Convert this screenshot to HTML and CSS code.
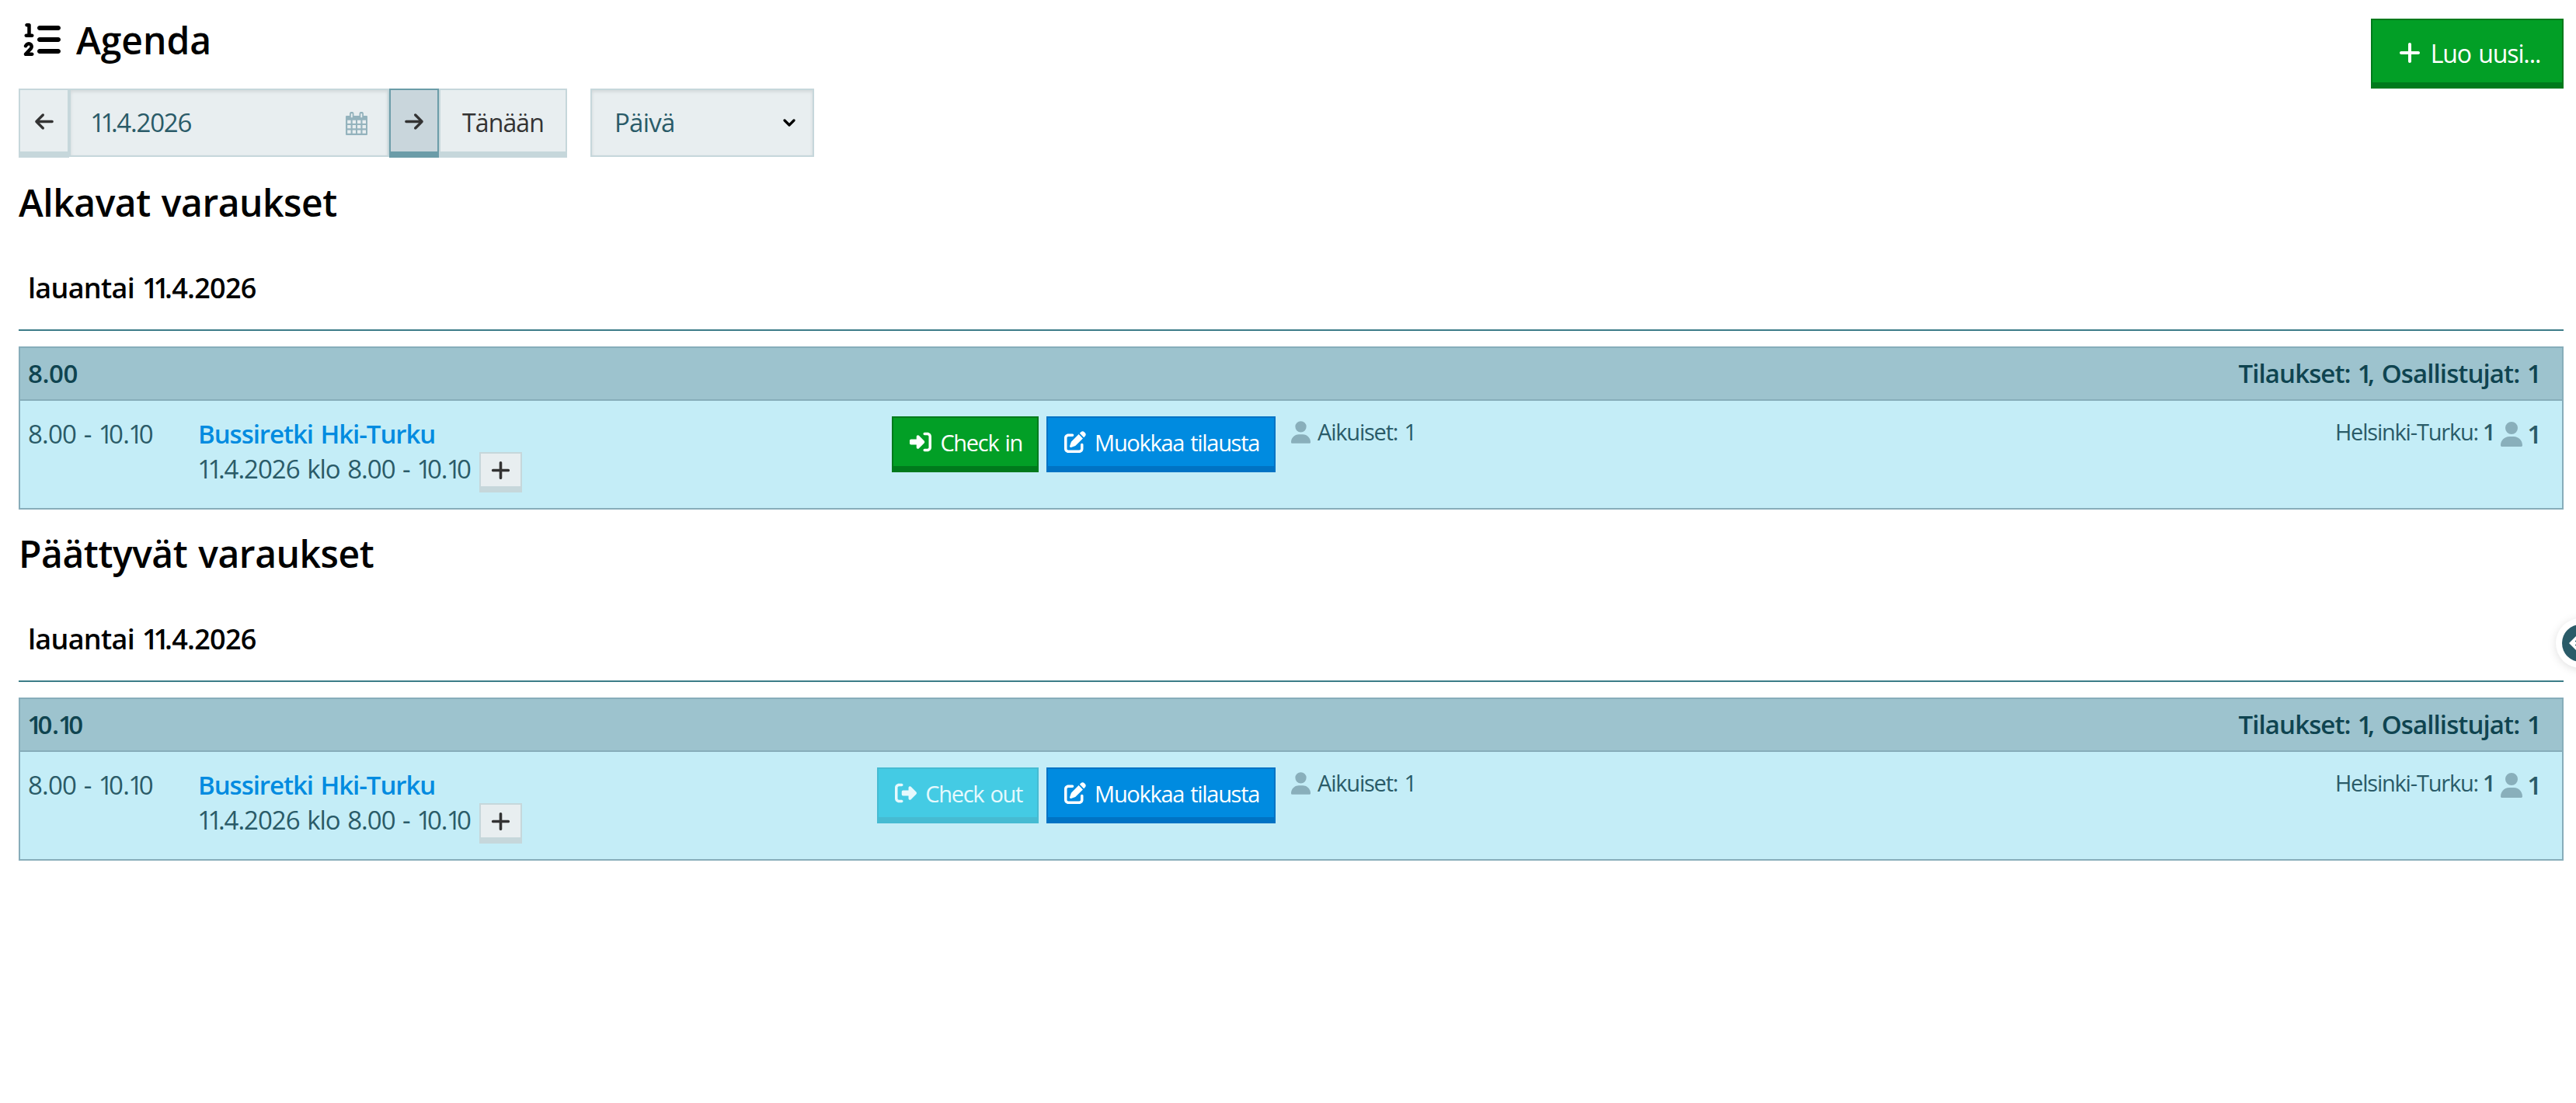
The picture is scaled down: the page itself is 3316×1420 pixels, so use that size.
FILE: index.html
```html
<!DOCTYPE html>
<html lang="fi">
<head>
  <meta charset="UTF-8">
  <meta name="viewport" content="width=device-width, initial-scale=1.0">
  <title>Agenda</title>
  <link rel="stylesheet" href="styles.css">
</head>
<body>
  <svg class="sprite">
    <symbol id="list" viewBox="0 0 512 512"><path d="M24 56c0-13.3 10.7-24 24-24l32 0c13.3 0 24 10.7 24 24l0 120 16 0c13.3 0 24 10.7 24 24s-10.7 24-24 24l-80 0c-13.3 0-24-10.7-24-24s10.7-24 24-24l16 0 0-96-8 0C34.7 80 24 69.3 24 56zM86.7 341.2c-6.5-7.4-18.3-6.9-24 1.2L51.5 357.9c-7.7 10.8-22.7 13.3-33.5 5.6s-13.3-22.7-5.6-33.5l11.1-15.6c23.7-33.2 72.3-35.6 99.2-4.9c21.3 24.4 20.8 60.9-1.1 84.7L86.8 432l33.2 0c13.3 0 24 10.7 24 24s-10.7 24-24 24l-88 0c-9.5 0-18.2-5.6-22-14.4s-2.1-18.9 4.3-25.9l72-78c5.3-5.8 5.4-14.6 .3-20.5zM224 64l256 0c17.7 0 32 14.3 32 32s-14.3 32-32 32l-256 0c-17.7 0-32-14.3-32-32s14.3-32 32-32zm0 160l256 0c17.7 0 32 14.3 32 32s-14.3 32-32 32l-256 0c-17.7 0-32-14.3-32-32s14.3-32 32-32zm0 160l256 0c17.7 0 32 14.3 32 32s-14.3 32-32 32l-256 0c-17.7 0-32-14.3-32-32s14.3-32 32-32z"/></symbol>
    <symbol id="left" viewBox="0 0 448 512"><path d="M9.4 233.4c-12.5 12.5-12.5 32.8 0 45.3l160 160c12.5 12.5 32.8 12.5 45.3 0s12.5-32.8 0-45.3L109.2 288 416 288c17.7 0 32-14.3 32-32s-14.3-32-32-32l-306.7 0L214.6 118.6c12.5-12.5 12.5-32.8 0-45.3s-32.8-12.5-45.3 0l-160 160z"/></symbol>
    <symbol id="right" viewBox="0 0 448 512"><path d="M438.6 278.6c12.5-12.5 12.5-32.8 0-45.3l-160-160c-12.5-12.5-32.8-12.5-45.3 0s-12.5 32.8 0 45.3L338.8 224 32 224c-17.7 0-32 14.3-32 32s14.3 32 32 32l306.7 0L233.4 393.4c-12.5 12.5-12.5 32.8 0 45.3s32.8 12.5 45.3 0l160-160z"/></symbol>
    <symbol id="plus" viewBox="0 0 448 512"><path d="M256 80c0-17.7-14.3-32-32-32s-32 14.3-32 32l0 144L48 224c-17.7 0-32 14.3-32 32s14.3 32 32 32l144 0 0 144c0 17.7 14.3 32 32 32s32-14.3 32-32l0-144 144 0c17.7 0 32-14.3 32-32s-14.3-32-32-32l-144 0 0-144z"/></symbol>
    <symbol id="in" viewBox="0 0 512 512"><path d="M217.9 105.9L340.7 228.7c7.2 7.2 11.3 17.1 11.3 27.3s-4.1 20.1-11.3 27.3L217.9 406.1c-6.4 6.4-15 9.9-24 9.9c-18.7 0-33.9-15.2-33.9-33.9l0-62.1L32 320c-17.7 0-32-14.3-32-32l0-64c0-17.7 14.3-32 32-32l128 0 0-62.1c0-18.7 15.2-33.9 33.9-33.9c9 0 17.6 3.6 24 9.9zM352 416l64 0c17.7 0 32-14.3 32-32l0-256c0-17.7-14.3-32-32-32l-64 0c-17.7 0-32-14.3-32-32s14.3-32 32-32l64 0c53 0 96 43 96 96l0 256c0 53-43 96-96 96l-64 0c-17.7 0-32-14.3-32-32s14.3-32 32-32z"/></symbol>
    <symbol id="out" viewBox="0 0 512 512"><path d="M377.9 105.9L500.7 228.7c7.2 7.2 11.3 17.1 11.3 27.3s-4.1 20.1-11.3 27.3L377.9 406.1c-6.4 6.4-15 9.9-24 9.9c-18.7 0-33.9-15.2-33.9-33.9l0-62.1-128 0c-17.7 0-32-14.3-32-32l0-64c0-17.7 14.3-32 32-32l128 0 0-62.1c0-18.7 15.2-33.9 33.9-33.9c9 0 17.6 3.6 24 9.9zM160 96L96 96c-17.7 0-32 14.3-32 32l0 256c0 17.7 14.3 32 32 32l64 0c17.7 0 32 14.3 32 32s-14.3 32-32 32l-64 0c-53 0-96-43-96-96L0 128C0 75 43 32 96 32l64 0c17.7 0 32 14.3 32 32s-14.3 32-32 32z"/></symbol>
    <symbol id="edit" viewBox="0 0 512 512"><path d="M471.6 21.7c-21.9-21.9-57.3-21.9-79.2 0L362.3 51.7l97.9 97.9 30.1-30.1c21.9-21.9 21.9-57.3 0-79.2L471.6 21.7zm-299.2 220c-6.1 6.1-10.8 13.6-13.5 21.9l-29.6 88.8c-2.9 8.6-.6 18.1 5.8 24.6s15.9 8.7 24.6 5.8l88.8-29.6c8.2-2.7 15.7-7.4 21.9-13.5L437.7 172.3 339.7 74.3 172.4 241.7zM96 64C43 64 0 107 0 160L0 416c0 53 43 96 96 96l256 0c53 0 96-43 96-96l0-96c0-17.7-14.3-32-32-32s-32 14.3-32 32l0 96c0 17.7-14.3 32-32 32L96 448c-17.7 0-32-14.3-32-32l0-256c0-17.7 14.3-32 32-32l96 0c17.7 0 32-14.3 32-32s-14.3-32-32-32L96 64z"/></symbol>
    <symbol id="user" viewBox="0 0 448 512"><path d="M224 256A128 128 0 1 0 224 0a128 128 0 1 0 0 256zm-45.7 48C79.8 304 0 383.8 0 482.3C0 498.7 13.3 512 29.7 512l388.6 0c16.4 0 29.7-13.3 29.7-29.7C448 383.8 368.2 304 269.7 304l-91.4 0z"/></symbol>
  </svg>

  <header class="topbar">
    <h1 class="title"><svg class="icon-list"><use href="#list"/></svg>Agenda</h1>
    <button class="btn btn-green btn-new"><svg class="icon-plus"><use href="#plus"/></svg>Luo uusi...</button>
  </header>

  <div class="toolbar">
    <button class="btn btn-arrow"><svg class="icon-arrow"><use href="#left"/></svg></button>
    <div class="field date">
      <span><span class="one">11</span>.4.2026</span>
      <svg class="icon-cal" viewBox="0 0 28 30">
        <path fill-rule="evenodd" d="M1 5h4V2.500a2.500 2.500 0 0 1 5.500 0V5h7V2.500a2.500 2.500 0 0 1 5.500 0V5h4a1 1 0 0 1 1 1v23a1 1 0 0 1-1 1H1a1 1 0 0 1-1-1V6a1 1 0 0 1 1-1zM6.800 2.200v5h1.900v-5zM19.300 2.200v5h1.900v-5zM2.200 10.700v4.200h4.400v-4.200zM8.700 10.700v4.200H13v-4.200zM15 10.700v4.200h4.400v-4.200zM21.500 10.700v4.200H26v-4.200zM2.200 17v4.300h4.400V17zM8.700 17v4.300H13V17zM15 17v4.300h4.400V17zM21.500 17v4.300H26V17zM2.200 23.500v4.300h4.400v-4.300zM8.700 23.500v4.300H13v-4.300zM15 23.500v4.300h4.400v-4.300zM21.500 23.500v4.300H26v-4.300z"/>
      </svg>
    </div>
    <button class="btn btn-arrow active"><svg class="icon-arrow"><use href="#right"/></svg></button>
    <button class="btn btn-today">Tänään</button>
    <div class="field select">
      <span>Päivä</span>
      <svg class="icon-chevron" viewBox="0 0 16 10"><path d="M2 2l6 6 6-6"/></svg>
    </div>
  </div>

  <section class="bookings">
    <h2>Alkavat varaukset</h2>
    <h3>lauantai <span class="one">11</span>.4.2026</h3>
    <div class="group">
      <div class="group-head">
        <span>8.00</span>
        <span class="totals">Tilaukset: <span class="one">1</span>, Osallistujat: 1</span>
      </div>
      <div class="row">
        <div class="time">8.00 - <span class="one">1</span>0.<span class="one">1</span>0</div>
        <div class="product">
          <a class="name">Bussiretki Hki-Turku</a>
          <div class="when">
            <span><span class="one">11</span>.4.2026 klo 8.00 - <span class="one">1</span>0.<span class="one">1</span>0</span>
            <button class="btn btn-add"><svg class="icon-add"><use href="#plus"/></svg></button>
          </div>
        </div>
        <div class="actions">
          <button class="btn btn-small btn-green"><svg class="icon-action"><use href="#in"/></svg>Check in</button>
          <button class="btn btn-small btn-blue"><svg class="icon-action"><use href="#edit"/></svg>Muokkaa tilausta</button>
        </div>
        <div class="people"><svg class="icon-user"><use href="#user"/></svg>Aikuiset: 1</div>
        <div class="resource">Helsinki-Turku: <b>1</b><svg class="icon-user-big"><use href="#user"/></svg><b class="count">1</b></div>
      </div>
    </div>
  </section>

  <section class="bookings">
    <h2>Päättyvät varaukset</h2>
    <h3>lauantai <span class="one">11</span>.4.2026</h3>
    <div class="group">
      <div class="group-head">
        <span><span class="one">1</span>0.<span class="one">1</span>0</span>
        <span class="totals">Tilaukset: <span class="one">1</span>, Osallistujat: 1</span>
      </div>
      <div class="row">
        <div class="time">8.00 - <span class="one">1</span>0.<span class="one">1</span>0</div>
        <div class="product">
          <a class="name">Bussiretki Hki-Turku</a>
          <div class="when">
            <span><span class="one">11</span>.4.2026 klo 8.00 - <span class="one">1</span>0.<span class="one">1</span>0</span>
            <button class="btn btn-add"><svg class="icon-add"><use href="#plus"/></svg></button>
          </div>
        </div>
        <div class="actions">
          <button class="btn btn-small btn-cyan"><svg class="icon-action"><use href="#out"/></svg>Check out</button>
          <button class="btn btn-small btn-blue"><svg class="icon-action"><use href="#edit"/></svg>Muokkaa tilausta</button>
        </div>
        <div class="people"><svg class="icon-user"><use href="#user"/></svg>Aikuiset: 1</div>
        <div class="resource">Helsinki-Turku: <b>1</b><svg class="icon-user-big"><use href="#user"/></svg><b class="count">1</b></div>
      </div>
    </div>
  </section>

  <!-- side panel handle -->
  <div class="handle">
    <svg viewBox="0 0 64 64"><circle cx="32" cy="32" r="24" fill="#2a5b68"/><path d="M17 32l11-11h20v22H28z" fill="#fff"/><path d="M25 29.500h3M25 34.500h3" stroke="#2a5b68" stroke-width="1.500"/></svg>
  </div>
</body>
</html>
```
FILE: styles.css
```css
* {
  box-sizing: border-box;
}
body {
  margin: 0;
  padding: 20px 16px 0 24px;
  height: 1420px;
  overflow: hidden;
  position: relative;
  background: #fff;
  color: #2a5b68;
  font-family: "Open Sans", sans-serif;
  font-size: 33px;
  letter-spacing: -0.4px;
  word-spacing: 2px;
}
h1, h2, h3 {
  margin: 0;
  color: #000;
  font-weight: 600;
}
h1, h2 {
  font-size: 48px;
  line-height: 63px;
}
svg {
  flex: none;
  fill: currentColor;
}
.sprite {
  display: none;
}
/* narrow figure one */
.one {
  letter-spacing: -0.17em;
  margin-left: -0.02em;
}

/* top */
.topbar {
  display: flex;
  justify-content: space-between;
  align-items: flex-start;
  height: 94px;
}
.title {
  display: flex;
  letter-spacing: 0;
}
.icon-list {
  width: 48px;
  height: 48px;
  margin: 7px 20px 0 6px;
}
.btn {
  display: flex;
  align-items: center;
  justify-content: center;
  padding: 0;
  border: 2px solid #c6d7db;
  border-bottom-width: 8px;
  border-radius: 0;
  background: #e8eef0;
  color: #333;
  font-family: inherit;
  font-size: 32px;
  word-spacing: 2px;
  white-space: nowrap;
}
.btn-green {
  background: #029f26;
  border-color: #007a1c;
  color: #fff;
}
.btn-blue {
  background: #008be0;
  border-color: #0073c4;
  color: #fff;
}
.btn-cyan {
  background: #44cbe4;
  border-color: #46bbd2;
  color: #e6f9fd;
}
.btn-new {
  width: 248px;
  height: 90px;
  margin-top: 4px;
  padding: 4px 0 0 6px;
  letter-spacing: -1.1px;
}
.icon-plus {
  width: 28px;
  height: 32px;
  margin-right: 13px;
}

/* date toolbar */
.toolbar {
  display: flex;
  align-items: flex-start;
}
.toolbar .btn {
  height: 89px;
}
.btn-arrow {
  width: 65px;
}
.btn-arrow.active {
  width: 64px;
  background: #c9d6dc;
  border-color: #6b9ca8;
}
.icon-arrow {
  width: 24px;
  height: 27px;
  margin-top: 2px;
}
.btn-today {
  width: 165px;
  padding-top: 4px;
  letter-spacing: -0.9px;
}
.field {
  display: flex;
  align-items: center;
  justify-content: space-between;
  height: 88px;
  border: 2px solid #c6d7db;
  background: #e8eef0;
  box-shadow: inset 0 2px 4px rgba(0, 0, 0, 0.1);
}
.field span {
  margin-top: -1px;
}
.date {
  width: 412px;
  padding: 0 26px 0 26px;
  letter-spacing: -1.2px;
}
.icon-cal {
  width: 28px;
  height: 30px;
  margin-top: 2px;
  color: #94b3bd;
}
.select {
  width: 288px;
  margin-left: 30px;
  padding: 0 22px 0 29px;
  letter-spacing: -0.75px;
}
.icon-chevron {
  width: 16px;
  height: 10px;
  fill: none;
  stroke: #000;
  stroke-width: 3.2;
  stroke-linecap: round;
  stroke-linejoin: round;
}

/* booking lists */
.bookings {
  margin-top: 26px;
}
.bookings + .bookings {
  margin-top: 25px;
}
h2 {
  letter-spacing: -0.45px;
}
h3 {
  margin-top: 54px;
  padding: 1px 0 29px 12px;
  border-bottom: 2px solid #3c7c88;
  font-size: 36px;
  line-height: 48px;
  letter-spacing: -0.7px;
}
.group {
  margin-top: 20px;
  border: 2px solid #87adba;
  background: #c4edf7;
}
.group-head {
  display: flex;
  justify-content: space-between;
  height: 68px;
  padding: 0 27px 0 10px;
  border-bottom: 2px solid #87adba;
  background: #9dc3ce;
  color: #0f4450;
  font-weight: 600;
  line-height: 65px;
}
.totals {
  letter-spacing: -0.9px;
}
.row {
  display: grid;
  grid-template-columns: 219px 500px 887px 1fr auto;
  height: 138px;
  padding: 20px 27px 0 10px;
  line-height: 45px;
}
.time {
  letter-spacing: -0.8px;
}
.name {
  color: #008be0;
  font-weight: 600;
  letter-spacing: -1.05px;
}
.when {
  display: flex;
  gap: 11px;
  letter-spacing: -1px;
}
.btn-add {
  width: 55px;
  height: 52px;
  margin-top: 1px;
}
.icon-add {
  width: 25px;
  height: 29px;
}
.actions {
  display: flex;
  justify-content: flex-end;
  gap: 10px;
}
.btn-small {
  height: 72px;
  padding: 0 19px 0 21px;
  font-size: 29px;
  letter-spacing: -1.3px;
}
.icon-action {
  width: 28px;
  height: 28px;
  margin-right: 11px;
}
.people, .resource {
  display: flex;
  font-size: 29px;
  line-height: 40px;
  letter-spacing: -1.2px;
}
.people {
  padding-left: 20px;
}
.icon-user {
  width: 25px;
  height: 29px;
  margin: 6px 9px 0 0;
}
.icon-user, .icon-user-big {
  color: #89afbb;
}
.resource b {
  margin-left: 6px;
  font-weight: 600;
}
.icon-user-big {
  width: 28px;
  height: 32px;
  margin: 7px 0 0 8px;
}
.resource .count {
  font-size: 33px;
  line-height: 45px;
}

/* half hidden at the window edge */
.handle {
  position: absolute;
  left: 3290px;
  top: 796px;
  width: 64px;
  height: 64px;
  border-radius: 50%;
  background: #fff;
  box-shadow: 0 2px 12px rgba(0, 0, 0, 0.13);
}
```
